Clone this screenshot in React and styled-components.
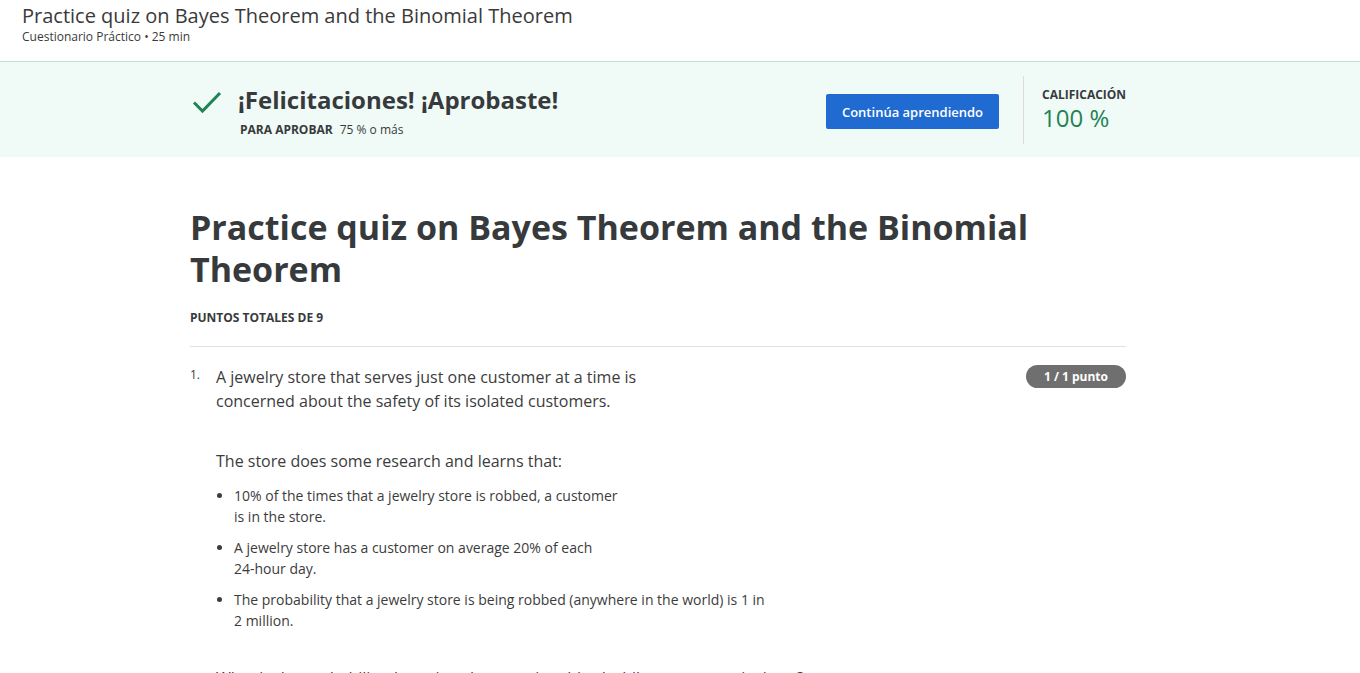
import styled, { createGlobalStyle } from "styled-components";

const GlobalStyle = createGlobalStyle`
  html, body {
    margin: 0;
    padding: 0;
    background: #fff;
    font-family: "Open Sans", "Noto Sans", sans-serif;
    color: #373a3c;
  }
  * { box-sizing: border-box; }
`;

const App = () => {
  return (
    <>
      <GlobalStyle />
      <Page>
        <TopBar>
          <TopTitle>Practice quiz on Bayes Theorem and the Binomial Theorem</TopTitle>
          <TopMeta>Cuestionario Práctico • 25 min</TopMeta>
        </TopBar>

        <Banner>
          <BannerInner>
            <PassBlock>
              <CheckIcon width="30" height="24" viewBox="0 0 30 24">
                <path d="M2 12.5 L10.5 21 L28 3" fill="none" stroke="#1f8354" strokeWidth="3" />
              </CheckIcon>
              <PassText>
                <PassTitle>¡Felicitaciones! ¡Aprobaste!</PassTitle>
                <PassRule>
                  <strong>PARA APROBAR</strong>
                  <span>75 % o más</span>
                </PassRule>
              </PassText>
            </PassBlock>
            <PrimaryButton>Continúa aprendiendo</PrimaryButton>
            <GradeBlock>
              <GradeLabel>CALIFICACIÓN</GradeLabel>
              <GradeValue>100 %</GradeValue>
            </GradeBlock>
          </BannerInner>
        </Banner>

        <Content>
          <QuizTitle>Practice quiz on Bayes Theorem and the Binomial Theorem</QuizTitle>
          <TotalPoints>PUNTOS TOTALES DE 9</TotalPoints>
          <Divider />

          <Question>
            <QNumber>1.</QNumber>
            <QBody>
              <QText>
                A jewelry store that serves just one customer at a time is
                <br />
                concerned about the safety of its isolated customers.
              </QText>
              <QText $gap="36px">The store does some research and learns that:</QText>
              <BulletList>
                <li>
                  10% of the times that a jewelry store is robbed, a customer
                  <br />
                  is in the store.
                </li>
                <li>
                  A jewelry store has a customer on average 20% of each
                  <br />
                  24-hour day.
                </li>
                <li>
                  The probability that a jewelry store is being robbed (anywhere in the world) is 1 in
                  <br />
                  2 million.
                </li>
              </BulletList>
              <QText $gap="35px">
                What is the probability that a jewelry store is robbed while a customer is there?
              </QText>
            </QBody>
            <ScoreBadge>1 / 1 punto</ScoreBadge>
          </Question>
        </Content>
      </Page>
    </>
  );
};

const Page = styled.div`
  width: 100%;
  height: 673px;
  overflow: hidden;
`;

const TopBar = styled.header`
  height: 62px;
  padding: 3px 22px 0;
  border-bottom: 1px solid #c6ddd3;
`;

const TopTitle = styled.h1`
  margin: 0;
  font-size: 20px;
  font-weight: 400;
  line-height: 26px;
  color: #3a3a3a;
`;

const TopMeta = styled.div`
  font-size: 12px;
  line-height: 16px;
  color: #3a3a3a;
`;

const Banner = styled.section`
  background: #f0faf7;
  height: 95px;
  padding: 14px 0 13px;
`;

const BannerInner = styled.div`
  width: 936px;
  margin-left: 190px;
  height: 100%;
  display: flex;
  align-items: center;
`;

const PassBlock = styled.div`
  flex: 1;
  display: flex;
  align-items: flex-start;
  padding-top: 2px;
`;

const CheckIcon = styled.svg`
  margin: 6px 15px 0 2px;
  flex-shrink: 0;
`;

const PassText = styled.div`
  display: flex;
  flex-direction: column;
`;

const PassTitle = styled.div`
  font-size: 24px;
  font-weight: 700;
  line-height: 32px;
  color: #373a3c;
  margin-left: 1px;
`;

const PassRule = styled.div`
  margin-top: 5px;
  font-size: 12px;
  line-height: 18px;
  display: flex;
  gap: 7px;
  margin-left: 3px;

  strong {
    font-weight: 700;
  }
`;

const PrimaryButton = styled.button`
  height: 35px;
  width: 173px;
  border: none;
  border-radius: 2px;
  background: #206bd1;
  color: #fff;
  font-family: "Open Sans", sans-serif;
  font-size: 13px;
  font-weight: 600;
  margin-top: 3px;
  cursor: pointer;
`;

const GradeBlock = styled.div`
  margin-left: 24px;
  height: 68px;
  width: 103px;
  border-left: 1px solid #dcdcdc;
  padding: 11px 0 0 18px;
`;

const GradeLabel = styled.div`
  font-size: 12px;
  font-weight: 700;
  line-height: 16px;
  color: #373a3c;
`;

const GradeValue = styled.div`
  font-size: 24px;
  line-height: 30px;
  color: #1f8354;
`;

const Content = styled.main`
  width: 936px;
  margin-left: 190px;
  padding-top: 49px;
`;

const QuizTitle = styled.h2`
  margin: 0;
  font-size: 34px;
  font-weight: 700;
  line-height: 42px;
  color: #373a3c;
`;

const TotalPoints = styled.div`
  margin-top: 19px;
  font-size: 12px;
  font-weight: 700;
  line-height: 18px;
`;

const Divider = styled.hr`
  margin: 19px 0 0;
  border: none;
  border-top: 1px solid #e1e1e1;
`;

const Question = styled.div`
  display: flex;
  padding-top: 18px;
`;

const QNumber = styled.div`
  width: 26px;
  font-size: 12px;
  line-height: 20px;
`;

const QBody = styled.div`
  flex: 1;
`;

const QText = styled.p`
  margin: ${(p) => p.$gap || "0"} 0 0;
  font-size: 16px;
  line-height: 24px;
  color: #3c3c3c;
`;

const BulletList = styled.ul`
  margin: 12px 0 0;
  padding-left: 18px;
  font-size: 14px;
  line-height: 21px;
  color: #3c3c3c;

  li + li {
    margin-top: 10px;
  }
`;

const ScoreBadge = styled.div`
  align-self: flex-start;
  height: 23px;
  width: 100px;
  border-radius: 12px;
  background: #6f6f6f;
  color: #fff;
  font-size: 12px;
  font-weight: 700;
  line-height: 23px;
  text-align: center;
`;

export default App;
